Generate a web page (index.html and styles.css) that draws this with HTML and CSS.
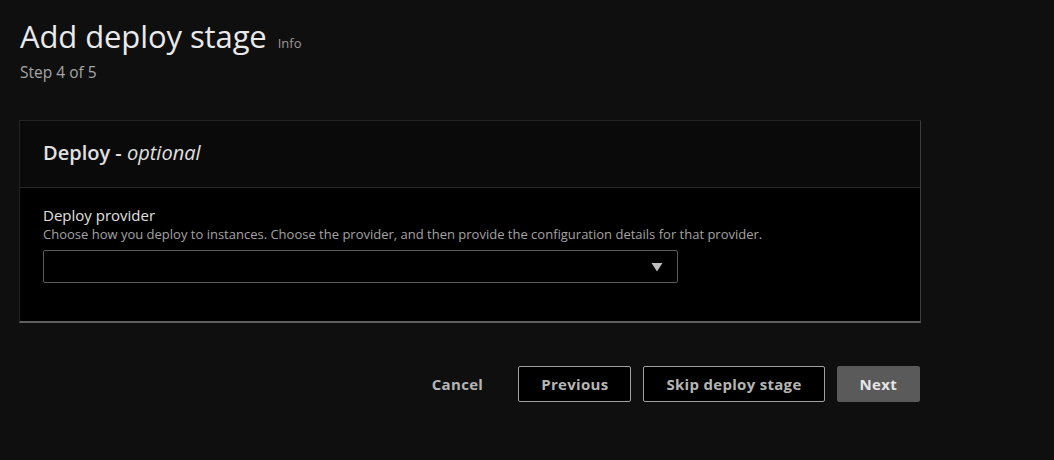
FILE: index.html
```html
<!DOCTYPE html>
<html>
<head>
<meta charset="utf-8">
<link rel="stylesheet" href="styles.css">
</head>
<body>
<div class="page">
  <div class="head">
    <div class="title-row">
      <h1 class="title">Add deploy stage</h1>
      <span class="info">Info</span>
    </div>
    <div class="step">Step 4 of 5</div>
  </div>
  <div class="panel">
    <div class="panel-head">
      <h2 class="panel-title">Deploy - <em>optional</em></h2>
    </div>
    <div class="panel-body">
      <div class="label">Deploy provider</div>
      <div class="desc">Choose how you deploy to instances. Choose the provider, and then provide the configuration details for that provider.</div>
      <div class="select">
        <svg class="caret" width="12" height="10" viewBox="0 0 12 10"><path d="M0.5 1 H11.5 L6 9.5 Z" fill="#bdbdbd"/></svg>
      </div>
    </div>
  </div>
  <div class="actions">
    <span class="btn-link">Cancel</span>
    <span class="btn">Previous</span>
    <span class="btn">Skip deploy stage</span>
    <span class="btn primary">Next</span>
  </div>
</div>
</body>
</html>
```
FILE: styles.css
```css
* { box-sizing: border-box; }
html, body { margin: 0; background: #0f0f0f; }
body { font-family: "Open Sans", "Noto Sans", sans-serif; color: #d9d9d9; }
.page { padding: 16px 0 0 20px; width: 921px; }
.title-row { display: flex; align-items: baseline; gap: 11px; }
.title { margin: 0; font-size: 31px; font-weight: 400; line-height: 40px; color: #e9e9e9; letter-spacing: -0.1px; }
.info { font-size: 13px; color: #9a9a9a; }
.step { font-size: 15.5px; line-height: 20px; color: #a6a6a6; margin-top: 6px; }
.panel { margin: 38px 0 0 -1px; background: #000; border: 1px solid #232323; border-right-color: #3d3d3d; border-bottom: 2px solid #5f5f5f; }
.panel-head { background: #0a0a0a; height: 67px; padding: 18px 23px 0; border-bottom: 1px solid #262626; }
.panel-title { margin: 0; font-size: 20px; line-height: 27px; font-weight: 600; color: #e0e0e0; }
.panel-title em { font-weight: 400; }
.panel-body { padding: 17px 23px 38px; }
.label { font-size: 15px; line-height: 20px; color: #e0e0e0; }
.desc { font-size: 13px; line-height: 16px; color: #a3a3a3; margin-top: 1px; }
.select { margin-top: 8px; width: 635px; height: 33px; border: 1px solid #5c5c5c; border-radius: 2px; display: flex; align-items: center; justify-content: flex-end; padding-right: 14px; }
.actions { display: flex; justify-content: flex-end; align-items: center; gap: 12px; margin-top: 43px; padding-right: 1px; }
.btn-link, .btn { font-size: 15px; letter-spacing: 0.3px; font-weight: 700; color: #b5b5b5; height: 36px; display: inline-flex; align-items: center; justify-content: center; border-radius: 2px; }
.btn-link { padding: 0 23px; }
.btn { border: 1px solid #a0a0a0; background: #000; padding: 0 22px; }
.btn.primary { background: #5a5a5a; border-color: #5a5a5a; color: #e6e6e6; }
```
